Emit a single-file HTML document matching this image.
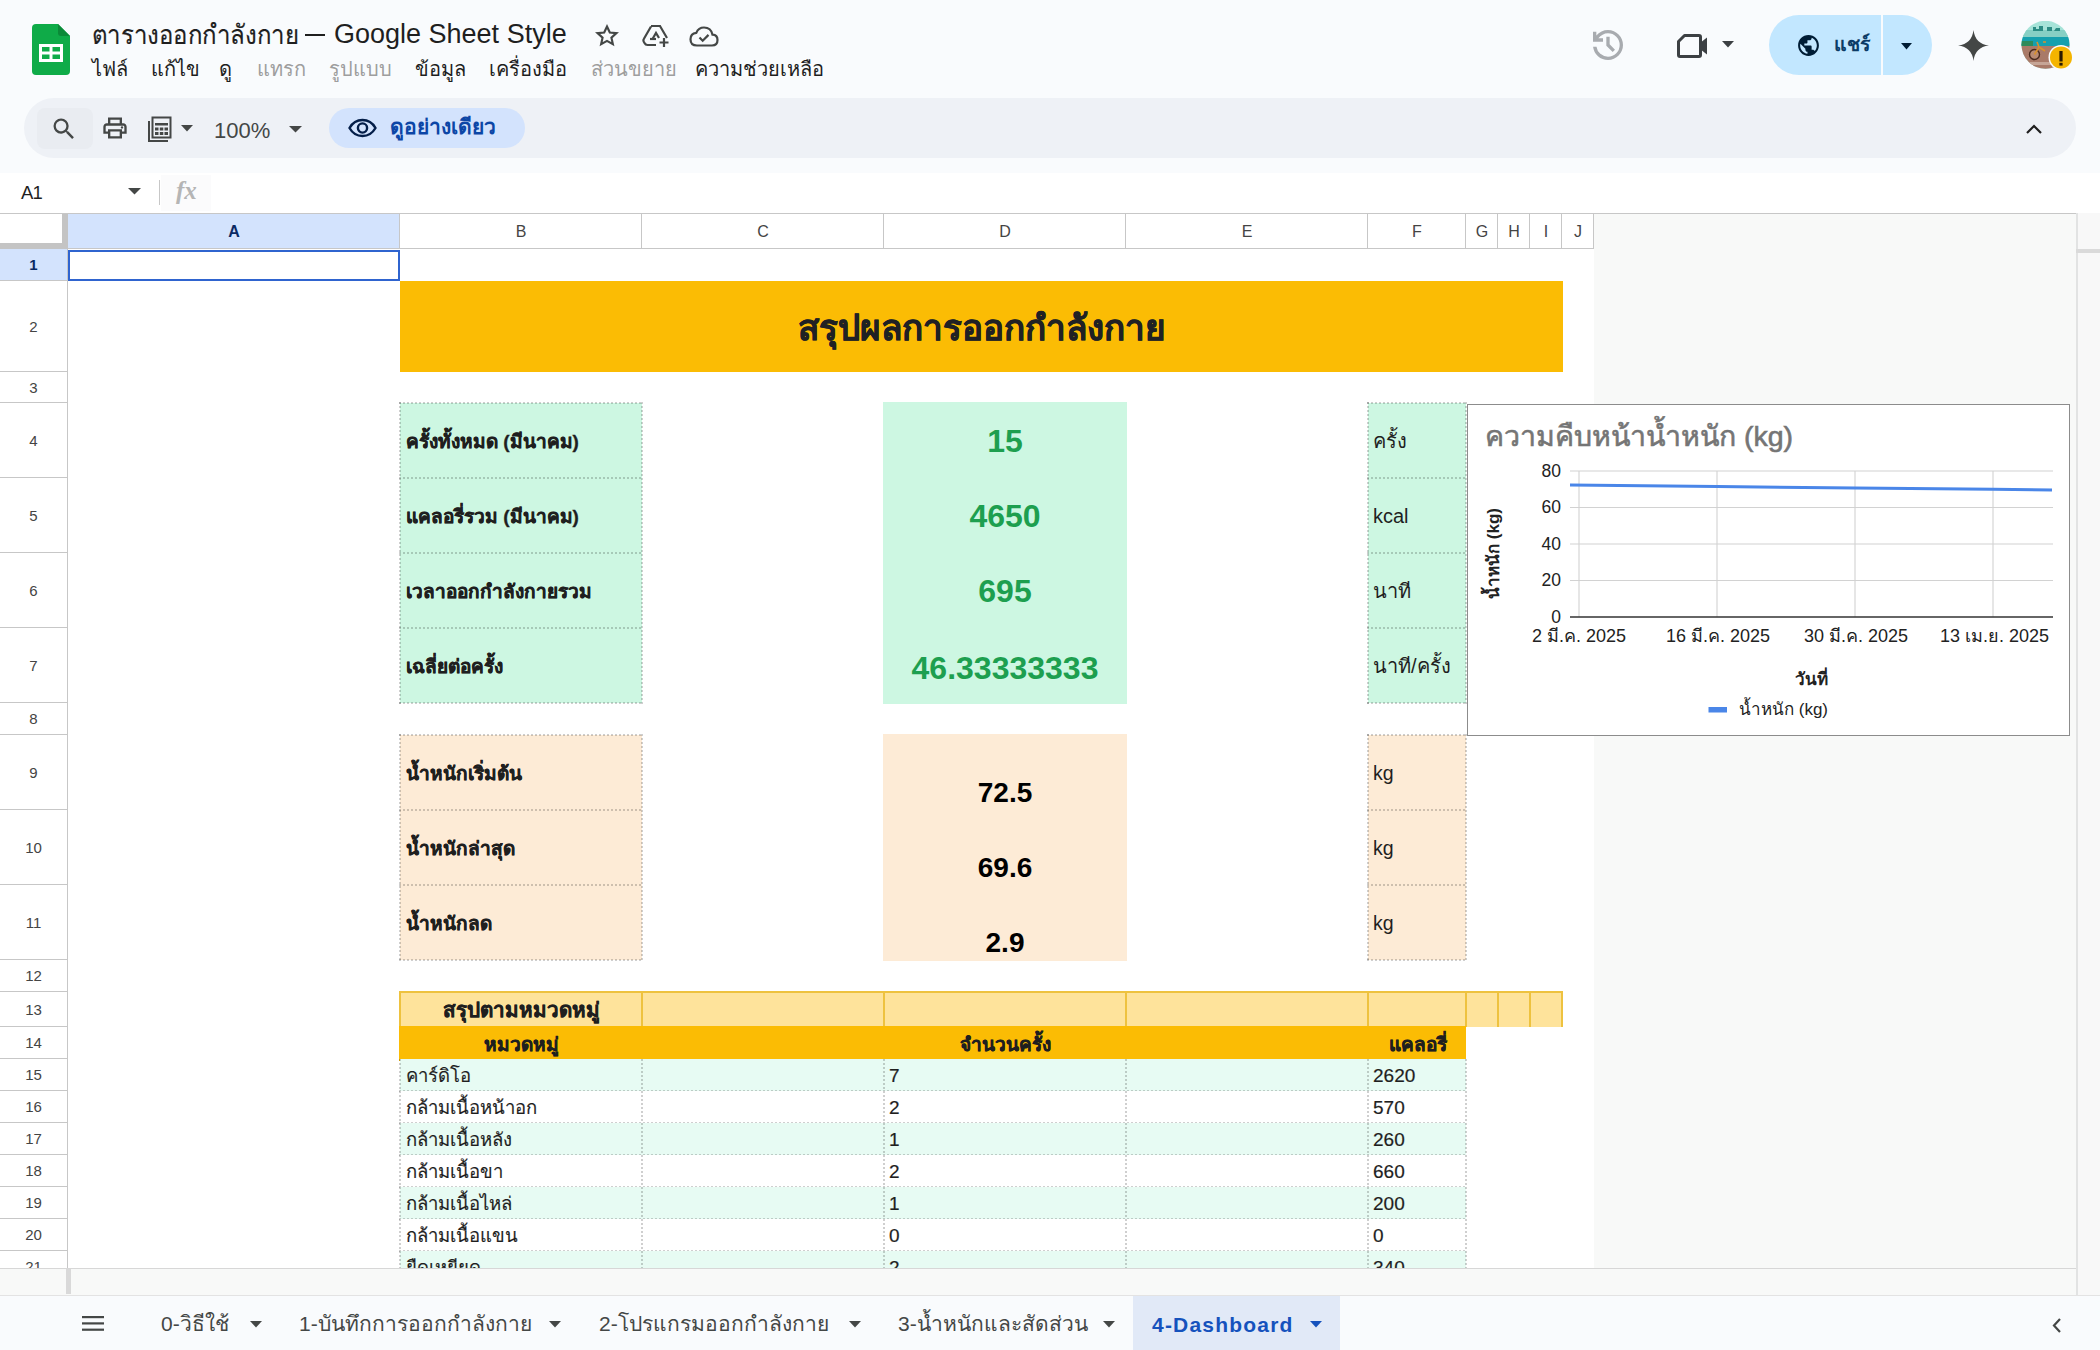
<!DOCTYPE html>
<html><head><meta charset="utf-8">
<style>
*{box-sizing:border-box}
html,body{margin:0;padding:0}
body{width:2100px;height:1350px;overflow:hidden;position:relative;background:#f9fbfd;font-family:"Liberation Sans",sans-serif;color:#1f1f1f}
.a{position:absolute}
.t{position:absolute;white-space:nowrap;line-height:1}
.ch{position:absolute;top:213px;height:36px;border-right:1px solid #c7c7c7;border-bottom:1px solid #c7c7c7;border-top:1px solid #c7c7c7;background:#fff;font-size:16px;color:#444;text-align:center;line-height:35px}
.rh{position:absolute;left:0;width:68px;border-right:1px solid #c7c7c7;border-bottom:1px solid #c7c7c7;background:#fff;font-size:15px;color:#444;text-align:center;display:flex;align-items:center;justify-content:center}
.cell{position:absolute;white-space:nowrap;overflow:hidden}
.dot{border:1px dotted #b5b5b5}
.g{background:#cef7e3}
.o{background:#fdebd6}
</style></head>
<body>
<!-- ===== HEADER ===== -->
<div id="hdr">
  <!-- sheets logo -->
  <svg class="a" style="left:32px;top:24px" width="38" height="51" viewBox="0 0 38 51">
    <path d="M4 0H26L38 12V47Q38 51 34 51H4Q0 51 0 47V4Q0 0 4 0Z" fill="#0f9d58" fill-opacity="1" style="fill:#0fab48"/>
    <path d="M26 0V9Q26 12 29 12H38Z" fill="#0b8a38"/>
    <rect x="7" y="20" width="24" height="18" fill="#fff"/>
    <rect x="10" y="23" width="7.5" height="4.5" fill="#0fab48"/>
    <rect x="20.5" y="23" width="7.5" height="4.5" fill="#0fab48"/>
    <rect x="10" y="30.5" width="7.5" height="4.5" fill="#0fab48"/>
    <rect x="20.5" y="30.5" width="7.5" height="4.5" fill="#0fab48"/>
  </svg>
  <div class="t" style="left:92px;top:21.5px;font-size:26.5px;color:#1f1f1f;transform:scaleX(0.905);transform-origin:0 0;-webkit-text-stroke:0.2px #1f1f1f">ตารางออกกำลังกาย</div>
  <div class="a" style="left:305px;top:34px;width:20px;height:2px;background:#1f1f1f"></div>
  <div class="t" style="left:334px;top:20.5px;font-size:27px;color:#1f1f1f">Google Sheet Style</div>
  <!-- star -->
  <svg class="a" style="left:594px;top:23px" width="26" height="26" viewBox="0 0 24 24"><path d="M12 3.2l2.6 5.6 6.1.6-4.6 4.1 1.3 6L12 16.5l-5.4 3 1.3-6-4.6-4.1 6.1-.6z" fill="none" stroke="#444746" stroke-width="2" stroke-linejoin="miter"/></svg>
  <!-- drive add -->
  <svg class="a" style="left:642px;top:24px" width="28" height="24" viewBox="0 0 28 24"><path d="M9 2h9l7 12M14 21H5.5Q3.5 21 2.5 19L1.8 17.8Q1 16.3 1.8 15L9 2.5" fill="none" stroke="#444746" stroke-width="2.2"/><path d="M10.5 15L14 9l3 5" fill="none" stroke="#444746" stroke-width="2.2"/><path d="M8 15h6" stroke="#444746" stroke-width="2.2"/><path d="M22 14v9M17.5 18.5h9" stroke="#444746" stroke-width="2.2"/></svg>
  <!-- cloud -->
  <svg class="a" style="left:689px;top:26px" width="30" height="21" viewBox="0 0 30 21"><path d="M8 19.5H23Q28.5 19.5 28.5 14Q28.5 9 23.5 8.7Q22 1.5 15 1.5Q9.5 1.5 7.3 6.8Q1.5 7.5 1.5 13.2Q1.5 19.5 8 19.5Z" fill="none" stroke="#444746" stroke-width="2.2"/><path d="M10.5 11.5l3.2 3.2 5.8-5.8" fill="none" stroke="#444746" stroke-width="2.2"/></svg>
  <!-- menu -->
  <div class="t" style="left:92px;top:59px;font-size:20px;color:#1f1f1f">ไฟล์</div>
  <div class="t" style="left:151px;top:59px;font-size:20px;color:#1f1f1f">แก้ไข</div>
  <div class="t" style="left:219px;top:59px;font-size:20px;color:#1f1f1f">ดู</div>
  <div class="t" style="left:257px;top:59px;font-size:20px;color:#9e9e9e">แทรก</div>
  <div class="t" style="left:329px;top:59px;font-size:20px;color:#9e9e9e">รูปแบบ</div>
  <div class="t" style="left:415px;top:59px;font-size:20px;color:#1f1f1f">ข้อมูล</div>
  <div class="t" style="left:489px;top:59px;font-size:20px;color:#1f1f1f">เครื่องมือ</div>
  <div class="t" style="left:591px;top:59px;font-size:20px;color:#9e9e9e">ส่วนขยาย</div>
  <div class="t" style="left:695px;top:59px;font-size:20px;color:#1f1f1f">ความช่วยเหลือ</div>

  <!-- history -->
  <svg class="a" style="left:1588px;top:25px" width="40" height="40" viewBox="0 -960 960 960"><path d="M480-120q-138 0-240.5-91.5T122-440h82q14 104 92.5 172T480-200q117 0 198.5-81.5T760-480q0-117-81.5-198.5T480-760q-69 0-129 32t-101 88h110v80H120v-240h80v94q51-64 124.5-99T480-840q75 0 140.5 28.5t114 77q48.5 48.5 77 114T840-480q0 75-28.5 140.5t-77 114q-48.5 48.5-114 77T480-120Zm112-192L440-464v-216h80v184l128 128-56 56Z" fill="#a8abaf"/></svg>
  <!-- camera -->
  <svg class="a" style="left:1676px;top:33px" width="32" height="26" viewBox="0 0 32 26"><path d="M2.5 8.5L8.5 2.5H23Q24.5 2.5 24.5 4V22Q24.5 23.5 23 23.5H4Q2.5 23.5 2.5 22Z" fill="none" stroke="#3c4043" stroke-width="3" stroke-linejoin="round"/><path d="M24 10L31 4.5V21.5L24 16Z" fill="#3c4043"/></svg>
  <svg class="a" style="left:1722px;top:41px" width="12" height="7" viewBox="0 0 12 7"><path d="M0 0H12L6 6.5Z" fill="#3c4043"/></svg>
  <!-- share -->
  <div class="a" style="left:1769px;top:15px;width:163px;height:60px;border-radius:30px;background:#c2e7ff"></div>
  <div class="a" style="left:1881px;top:15px;width:2px;height:60px;background:#f9fbfd"></div>
  <svg class="a" style="left:1796px;top:33px" width="25" height="25" viewBox="0 0 24 24"><path d="M12 2C6.48 2 2 6.48 2 12s4.48 10 10 10 10-4.48 10-10S17.52 2 12 2zm-1 17.93c-3.95-.49-7-3.85-7-7.93 0-.62.08-1.21.21-1.79L9 15v1c0 1.1.9 2 2 2v1.93zm6.9-2.54c-.26-.81-1-1.39-1.9-1.39h-1v-3c0-.55-.45-1-1-1H8v-2h2c.55 0 1-.45 1-1V7h2c1.1 0 2-.9 2-2v-.41c2.93 1.19 5 4.06 5 7.41 0 2.08-.8 3.97-2.1 5.39z" fill="#001d35"/></svg>
  <div class="t" style="left:1834px;top:35px;font-size:19.5px;font-weight:bold;color:#0b3b66">แชร์</div>
  <svg class="a" style="left:1901px;top:43px" width="11" height="7" viewBox="0 0 11 7"><path d="M0 0H11L5.5 6.5Z" fill="#001d35"/></svg>
  <!-- gemini -->
  <svg class="a" style="left:1958px;top:30px" width="31" height="31" viewBox="0 0 30 30"><path d="M15 0Q16.5 13.5 30 15Q16.5 16.5 15 30Q13.5 16.5 0 15Q13.5 13.5 15 0Z" fill="#444746"/></svg>
  <!-- avatar -->
  <svg class="a" style="left:2021px;top:21px" width="56" height="52" viewBox="0 0 56 52">
    <defs><clipPath id="av"><circle cx="24.5" cy="23.8" r="24"/></clipPath></defs>
    <g clip-path="url(#av)">
      <rect x="0" y="0" width="50" height="50" fill="#a6e3d8"/>
      <rect x="0" y="9" width="50" height="7" fill="#86cfc4"/>
      <path d="M12 10V6h3v2h3V5h4v5zM26 10V6h5v4zM33 10l2-3h4v3z" fill="#2c8c84"/>
      <rect x="0" y="16" width="50" height="9" fill="#16a0ae"/>
      <rect x="0" y="20" width="12" height="5" fill="#2e8a5a"/>
      <rect x="0" y="25" width="50" height="25" fill="#a97a68"/>
      <rect x="0" y="41" width="50" height="3" fill="#c6a596"/>
      <circle cx="13.5" cy="33.5" r="5" fill="#b88a72" stroke="#4a2a1e" stroke-width="1.4"/>
      <path d="M13.5 33.5L18 26L24 30M18 26L16 21M22 21h3" fill="none" stroke="#d9902d" stroke-width="1.6"/>
    </g>
    <circle cx="40" cy="36.4" r="12.5" fill="#f9fbfd"/>
    <circle cx="40" cy="36.4" r="11" fill="#f4b400"/>
    <rect x="38.4" y="30" width="3.2" height="10.5" fill="#2a1a00"/>
    <rect x="38.4" y="41.8" width="3.2" height="2.8" fill="#2a1a00"/>
  </svg>

  <!-- toolbar -->
  <div class="a" style="left:24px;top:98px;width:2052px;height:60px;border-radius:30px;background:#eef1f6"></div>
  <div class="a" style="left:37px;top:108px;width:56px;height:41px;border-radius:8px;background:#e9ecf1"></div>
  <svg class="a" style="left:50px;top:115px" width="28" height="28" viewBox="0 0 24 24"><path d="M15.5 14h-.79l-.28-.27A6.471 6.471 0 0 0 16 9.5 6.5 6.5 0 1 0 9.5 16c1.61 0 3.09-.59 4.23-1.57l.27.28v.79l5 4.99L20.49 19l-4.99-5zm-6 0C7.01 14 5 11.99 5 9.5S7.01 5 9.5 5 14 7.01 14 9.5 11.99 14 9.5 14z" fill="#444746"/></svg>
  <svg class="a" style="left:101px;top:114px" width="28" height="28" viewBox="0 0 24 24"><path d="M19 8h-1V3H6v5H5c-1.66 0-3 1.34-3 3v6h4v4h12v-4h4v-6c0-1.66-1.34-3-3-3zM8 5h8v3H8V5zm8 12v2H8v-4h8v2zm2-2v-2H6v2H4v-4c0-.55.45-1 1-1h14c.55 0 1 .45 1 1v4h-2z" fill="#444746"/><circle cx="18" cy="11.5" r="1" fill="#444746"/></svg>
  <svg class="a" style="left:147px;top:116px" width="26" height="26" viewBox="0 0 26 26"><path d="M2 5V25H21" fill="none" stroke="#444746" stroke-width="2"/><rect x="5.5" y="1.5" width="18" height="20" fill="none" stroke="#444746" stroke-width="2"/><rect x="8" y="7" width="13" height="2.5" fill="#444746"/><rect x="8" y="11.5" width="3.5" height="3" fill="#444746"/><rect x="12.8" y="11.5" width="3.5" height="3" fill="#444746"/><rect x="17.5" y="11.5" width="3.5" height="3" fill="#444746"/><rect x="8" y="16" width="3.5" height="3" fill="#444746"/><rect x="12.8" y="16" width="3.5" height="3" fill="#444746"/><rect x="17.5" y="16" width="3.5" height="3" fill="#444746"/></svg>
  <svg class="a" style="left:181px;top:125px" width="12" height="7" viewBox="0 0 12 7"><path d="M0 0H12L6 6.5Z" fill="#444746"/></svg>
  <div class="t" style="left:214px;top:120px;font-size:22px;color:#444746">100%</div>
  <svg class="a" style="left:289px;top:126px" width="13" height="7" viewBox="0 0 13 7"><path d="M0 0H13L6.5 6.5Z" fill="#444746"/></svg>
  <div class="a" style="left:329px;top:108px;width:196px;height:40px;border-radius:20px;background:#d3e3fd"></div>
  <svg class="a" style="left:348px;top:116px" width="29" height="24" viewBox="0 0 29 24"><path d="M14.5 4C8 4 3.5 8.5 1.5 12C3.5 15.5 8 20 14.5 20S25.5 15.5 27.5 12C25.5 8.5 21 4 14.5 4Z" fill="none" stroke="#041e49" stroke-width="2.4"/><circle cx="14.5" cy="12" r="4.6" fill="none" stroke="#041e49" stroke-width="2.4"/></svg>
  <div class="t" style="left:390px;top:116px;font-size:21px;font-weight:bold;color:#0c46a6">ดูอย่างเดียว</div>
  <svg class="a" style="left:2026px;top:124px" width="16" height="10" viewBox="0 0 16 10"><path d="M1 9L8 2L15 9" fill="none" stroke="#1f1f1f" stroke-width="2.2"/></svg>
</div>

<!-- ===== FORMULA BAR ===== -->
<div class="a" style="left:0;top:173px;width:2100px;height:40px;background:#fff"></div>
<div class="t" style="left:21px;top:184px;font-size:18.5px;color:#1f1f1f;letter-spacing:-0.8px">A1</div>
<svg class="a" style="left:128px;top:188px" width="13" height="7" viewBox="0 0 13 7"><path d="M0 0H13L6.5 6.5Z" fill="#444746"/></svg>
<div class="a" style="left:159px;top:180px;width:1px;height:25px;background:#c7c7c7"></div>
<div class="a" style="left:161px;top:175px;width:50px;height:36px;background:#fbfbfc"></div>
<div class="t" style="left:176px;top:178px;font-size:25px;font-style:italic;font-weight:bold;font-family:'Liberation Serif',serif;color:#b5b5b5">fx</div>

<div class="a" style="left:68px;top:249px;width:1526px;height:1020px;background:#fff"></div>
<div class="a" style="left:1594px;top:213px;width:482px;height:1056px;background:#f8f9f8"></div>
<div class="a" style="left:0;top:249px;width:68px;height:1020px;background:#fff"></div>
<div class="a" style="left:0;top:213px;width:1594px;height:36px;background:#fff"></div>
<div class="a" style="left:0;top:213px;width:2076px;height:1px;background:#c7c7c7"></div>
<div class="a" style="left:62px;top:214px;width:6px;height:35px;background:#c4c4c4"></div>
<div class="a" style="left:0;top:243px;width:68px;height:6px;background:#c4c4c4"></div>
<div class="a" style="left:68px;top:214px;width:332px;height:35px;background:#d3e3fd"></div>
<div class="t" style="left:68px;top:224px;width:332px;text-align:center;font-size:16px;font-weight:bold;color:#0b2a63">A</div>
<div class="a" style="left:399px;top:214px;width:1px;height:35px;background:#c7c7c7"></div>
<div class="t" style="left:400px;top:224px;width:242px;text-align:center;font-size:16px;color:#444">B</div>
<div class="a" style="left:641px;top:214px;width:1px;height:35px;background:#c7c7c7"></div>
<div class="t" style="left:642px;top:224px;width:242px;text-align:center;font-size:16px;color:#444">C</div>
<div class="a" style="left:883px;top:214px;width:1px;height:35px;background:#c7c7c7"></div>
<div class="t" style="left:884px;top:224px;width:242px;text-align:center;font-size:16px;color:#444">D</div>
<div class="a" style="left:1125px;top:214px;width:1px;height:35px;background:#c7c7c7"></div>
<div class="t" style="left:1126px;top:224px;width:242px;text-align:center;font-size:16px;color:#444">E</div>
<div class="a" style="left:1367px;top:214px;width:1px;height:35px;background:#c7c7c7"></div>
<div class="t" style="left:1368px;top:224px;width:98px;text-align:center;font-size:16px;color:#444">F</div>
<div class="a" style="left:1465px;top:214px;width:1px;height:35px;background:#c7c7c7"></div>
<div class="t" style="left:1466px;top:224px;width:32px;text-align:center;font-size:16px;color:#444">G</div>
<div class="a" style="left:1497px;top:214px;width:1px;height:35px;background:#c7c7c7"></div>
<div class="t" style="left:1498px;top:224px;width:32px;text-align:center;font-size:16px;color:#444">H</div>
<div class="a" style="left:1529px;top:214px;width:1px;height:35px;background:#c7c7c7"></div>
<div class="t" style="left:1530px;top:224px;width:32px;text-align:center;font-size:16px;color:#444">I</div>
<div class="a" style="left:1561px;top:214px;width:1px;height:35px;background:#c7c7c7"></div>
<div class="t" style="left:1562px;top:224px;width:32px;text-align:center;font-size:16px;color:#444">J</div>
<div class="a" style="left:1593px;top:214px;width:1px;height:35px;background:#c7c7c7"></div>
<div class="a" style="left:68px;top:248px;width:1526px;height:1px;background:#c7c7c7"></div>
<div class="a" style="left:0;top:249px;width:67px;height:32px;background:#d3e3fd"></div>
<div class="t" style="left:0;top:249px;width:67px;height:32px;line-height:32px;text-align:center;font-size:15px;font-weight:bold;color:#0b2a63">1</div>
<div class="a" style="left:0;top:280px;width:67px;height:1px;background:#c7c7c7"></div>
<div class="t" style="left:0;top:281px;width:67px;height:91px;line-height:91px;text-align:center;font-size:15px;color:#444">2</div>
<div class="a" style="left:0;top:371px;width:67px;height:1px;background:#c7c7c7"></div>
<div class="t" style="left:0;top:372px;width:67px;height:31px;line-height:31px;text-align:center;font-size:15px;color:#444">3</div>
<div class="a" style="left:0;top:402px;width:67px;height:1px;background:#c7c7c7"></div>
<div class="t" style="left:0;top:403px;width:67px;height:75px;line-height:75px;text-align:center;font-size:15px;color:#444">4</div>
<div class="a" style="left:0;top:477px;width:67px;height:1px;background:#c7c7c7"></div>
<div class="t" style="left:0;top:478px;width:67px;height:75px;line-height:75px;text-align:center;font-size:15px;color:#444">5</div>
<div class="a" style="left:0;top:552px;width:67px;height:1px;background:#c7c7c7"></div>
<div class="t" style="left:0;top:553px;width:67px;height:75px;line-height:75px;text-align:center;font-size:15px;color:#444">6</div>
<div class="a" style="left:0;top:627px;width:67px;height:1px;background:#c7c7c7"></div>
<div class="t" style="left:0;top:628px;width:67px;height:75px;line-height:75px;text-align:center;font-size:15px;color:#444">7</div>
<div class="a" style="left:0;top:702px;width:67px;height:1px;background:#c7c7c7"></div>
<div class="t" style="left:0;top:703px;width:67px;height:32px;line-height:32px;text-align:center;font-size:15px;color:#444">8</div>
<div class="a" style="left:0;top:734px;width:67px;height:1px;background:#c7c7c7"></div>
<div class="t" style="left:0;top:735px;width:67px;height:75px;line-height:75px;text-align:center;font-size:15px;color:#444">9</div>
<div class="a" style="left:0;top:809px;width:67px;height:1px;background:#c7c7c7"></div>
<div class="t" style="left:0;top:810px;width:67px;height:75px;line-height:75px;text-align:center;font-size:15px;color:#444">10</div>
<div class="a" style="left:0;top:884px;width:67px;height:1px;background:#c7c7c7"></div>
<div class="t" style="left:0;top:885px;width:67px;height:75px;line-height:75px;text-align:center;font-size:15px;color:#444">11</div>
<div class="a" style="left:0;top:959px;width:67px;height:1px;background:#c7c7c7"></div>
<div class="t" style="left:0;top:960px;width:67px;height:32px;line-height:32px;text-align:center;font-size:15px;color:#444">12</div>
<div class="a" style="left:0;top:991px;width:67px;height:1px;background:#c7c7c7"></div>
<div class="t" style="left:0;top:992px;width:67px;height:35px;line-height:35px;text-align:center;font-size:15px;color:#444">13</div>
<div class="a" style="left:0;top:1026px;width:67px;height:1px;background:#c7c7c7"></div>
<div class="t" style="left:0;top:1027px;width:67px;height:32px;line-height:32px;text-align:center;font-size:15px;color:#444">14</div>
<div class="a" style="left:0;top:1058px;width:67px;height:1px;background:#c7c7c7"></div>
<div class="t" style="left:0;top:1059px;width:67px;height:32px;line-height:32px;text-align:center;font-size:15px;color:#444">15</div>
<div class="a" style="left:0;top:1090px;width:67px;height:1px;background:#c7c7c7"></div>
<div class="t" style="left:0;top:1091px;width:67px;height:32px;line-height:32px;text-align:center;font-size:15px;color:#444">16</div>
<div class="a" style="left:0;top:1122px;width:67px;height:1px;background:#c7c7c7"></div>
<div class="t" style="left:0;top:1123px;width:67px;height:32px;line-height:32px;text-align:center;font-size:15px;color:#444">17</div>
<div class="a" style="left:0;top:1154px;width:67px;height:1px;background:#c7c7c7"></div>
<div class="t" style="left:0;top:1155px;width:67px;height:32px;line-height:32px;text-align:center;font-size:15px;color:#444">18</div>
<div class="a" style="left:0;top:1186px;width:67px;height:1px;background:#c7c7c7"></div>
<div class="t" style="left:0;top:1187px;width:67px;height:32px;line-height:32px;text-align:center;font-size:15px;color:#444">19</div>
<div class="a" style="left:0;top:1218px;width:67px;height:1px;background:#c7c7c7"></div>
<div class="t" style="left:0;top:1219px;width:67px;height:32px;line-height:32px;text-align:center;font-size:15px;color:#444">20</div>
<div class="a" style="left:0;top:1250px;width:67px;height:1px;background:#c7c7c7"></div>
<div class="t" style="left:0;top:1251px;width:67px;height:32px;line-height:32px;text-align:center;font-size:15px;color:#444">21</div>
<div class="a" style="left:67px;top:249px;width:1px;height:1020px;background:#c7c7c7"></div>
<div class="a" style="left:400px;top:281px;width:1163px;height:91px;background:#fbbc04;"></div>
<div class="t" style="left:400px;top:310px;width:1163px;text-align:center;font-size:35px;font-weight:bold;color:#202124;-webkit-text-stroke:0.5px #202124">สรุปผลการออกกำลังกาย</div>
<div class="a" style="left:400px;top:403px;width:242px;height:300px;background:#cdf7e2;"></div>
<div class="a" style="left:883px;top:402px;width:244px;height:302px;background:#cdf7e2;"></div>
<div class="a" style="left:1368px;top:403px;width:98px;height:300px;background:#cdf7e2;"></div>
<div class="a" style="left:399px;top:402px;width:244px;height:2px;background:repeating-linear-gradient(90deg,rgba(0,0,0,.19) 0 2px,transparent 2px 4px)"></div>
<div class="a" style="left:1367px;top:402px;width:100px;height:2px;background:repeating-linear-gradient(90deg,rgba(0,0,0,.19) 0 2px,transparent 2px 4px)"></div>
<div class="a" style="left:399px;top:477px;width:244px;height:2px;background:repeating-linear-gradient(90deg,rgba(0,0,0,.19) 0 2px,transparent 2px 4px)"></div>
<div class="a" style="left:1367px;top:477px;width:100px;height:2px;background:repeating-linear-gradient(90deg,rgba(0,0,0,.19) 0 2px,transparent 2px 4px)"></div>
<div class="a" style="left:399px;top:552px;width:244px;height:2px;background:repeating-linear-gradient(90deg,rgba(0,0,0,.19) 0 2px,transparent 2px 4px)"></div>
<div class="a" style="left:1367px;top:552px;width:100px;height:2px;background:repeating-linear-gradient(90deg,rgba(0,0,0,.19) 0 2px,transparent 2px 4px)"></div>
<div class="a" style="left:399px;top:627px;width:244px;height:2px;background:repeating-linear-gradient(90deg,rgba(0,0,0,.19) 0 2px,transparent 2px 4px)"></div>
<div class="a" style="left:1367px;top:627px;width:100px;height:2px;background:repeating-linear-gradient(90deg,rgba(0,0,0,.19) 0 2px,transparent 2px 4px)"></div>
<div class="a" style="left:399px;top:702px;width:244px;height:2px;background:repeating-linear-gradient(90deg,rgba(0,0,0,.19) 0 2px,transparent 2px 4px)"></div>
<div class="a" style="left:1367px;top:702px;width:100px;height:2px;background:repeating-linear-gradient(90deg,rgba(0,0,0,.19) 0 2px,transparent 2px 4px)"></div>
<div class="a" style="left:399px;top:402px;width:2px;height:302px;background:repeating-linear-gradient(180deg,rgba(0,0,0,.19) 0 2px,transparent 2px 4px)"></div>
<div class="a" style="left:641px;top:402px;width:2px;height:302px;background:repeating-linear-gradient(180deg,rgba(0,0,0,.19) 0 2px,transparent 2px 4px)"></div>
<div class="a" style="left:1367px;top:402px;width:2px;height:302px;background:repeating-linear-gradient(180deg,rgba(0,0,0,.19) 0 2px,transparent 2px 4px)"></div>
<div class="a" style="left:1465px;top:402px;width:2px;height:302px;background:repeating-linear-gradient(180deg,rgba(0,0,0,.19) 0 2px,transparent 2px 4px)"></div>
<div class="t" style="left:406px;top:432px;font-size:19px;font-weight:bold;color:#1f1f1f;-webkit-text-stroke:0.35px #1f1f1f">ครั้งทั้งหมด (มีนาคม)</div>
<div class="t" style="left:884px;top:425px;width:242px;text-align:center;font-size:32px;font-weight:bold;color:#1d9f4f;">15</div>
<div class="t" style="left:1373px;top:431px;font-size:20px;color:#1f1f1f;">ครั้ง</div>
<div class="t" style="left:406px;top:507px;font-size:19px;font-weight:bold;color:#1f1f1f;-webkit-text-stroke:0.35px #1f1f1f">แคลอรี่รวม (มีนาคม)</div>
<div class="t" style="left:884px;top:500px;width:242px;text-align:center;font-size:32px;font-weight:bold;color:#1d9f4f;">4650</div>
<div class="t" style="left:1373px;top:506px;font-size:20px;color:#1f1f1f;">kcal</div>
<div class="t" style="left:406px;top:582px;font-size:19px;font-weight:bold;color:#1f1f1f;-webkit-text-stroke:0.35px #1f1f1f">เวลาออกกำลังกายรวม</div>
<div class="t" style="left:884px;top:575px;width:242px;text-align:center;font-size:32px;font-weight:bold;color:#1d9f4f;">695</div>
<div class="t" style="left:1373px;top:581px;font-size:20px;color:#1f1f1f;">นาที</div>
<div class="t" style="left:406px;top:657px;font-size:19px;font-weight:bold;color:#1f1f1f;-webkit-text-stroke:0.35px #1f1f1f">เฉลี่ยต่อครั้ง</div>
<div class="t" style="left:884px;top:652px;width:242px;text-align:center;font-size:32px;font-weight:bold;color:#1d9f4f;">46.33333333</div>
<div class="t" style="left:1373px;top:656px;font-size:20px;color:#1f1f1f;">นาที/ครั้ง</div>
<div class="a" style="left:400px;top:735px;width:242px;height:225px;background:#fdebd6;"></div>
<div class="a" style="left:883px;top:734px;width:244px;height:227px;background:#fdebd6;"></div>
<div class="a" style="left:1368px;top:735px;width:98px;height:225px;background:#fdebd6;"></div>
<div class="a" style="left:399px;top:734px;width:244px;height:2px;background:repeating-linear-gradient(90deg,rgba(0,0,0,.19) 0 2px,transparent 2px 4px)"></div>
<div class="a" style="left:1367px;top:734px;width:100px;height:2px;background:repeating-linear-gradient(90deg,rgba(0,0,0,.19) 0 2px,transparent 2px 4px)"></div>
<div class="a" style="left:399px;top:809px;width:244px;height:2px;background:repeating-linear-gradient(90deg,rgba(0,0,0,.19) 0 2px,transparent 2px 4px)"></div>
<div class="a" style="left:1367px;top:809px;width:100px;height:2px;background:repeating-linear-gradient(90deg,rgba(0,0,0,.19) 0 2px,transparent 2px 4px)"></div>
<div class="a" style="left:399px;top:884px;width:244px;height:2px;background:repeating-linear-gradient(90deg,rgba(0,0,0,.19) 0 2px,transparent 2px 4px)"></div>
<div class="a" style="left:1367px;top:884px;width:100px;height:2px;background:repeating-linear-gradient(90deg,rgba(0,0,0,.19) 0 2px,transparent 2px 4px)"></div>
<div class="a" style="left:399px;top:959px;width:244px;height:2px;background:repeating-linear-gradient(90deg,rgba(0,0,0,.19) 0 2px,transparent 2px 4px)"></div>
<div class="a" style="left:1367px;top:959px;width:100px;height:2px;background:repeating-linear-gradient(90deg,rgba(0,0,0,.19) 0 2px,transparent 2px 4px)"></div>
<div class="a" style="left:399px;top:734px;width:2px;height:227px;background:repeating-linear-gradient(180deg,rgba(0,0,0,.19) 0 2px,transparent 2px 4px)"></div>
<div class="a" style="left:641px;top:734px;width:2px;height:227px;background:repeating-linear-gradient(180deg,rgba(0,0,0,.19) 0 2px,transparent 2px 4px)"></div>
<div class="a" style="left:1367px;top:734px;width:2px;height:227px;background:repeating-linear-gradient(180deg,rgba(0,0,0,.19) 0 2px,transparent 2px 4px)"></div>
<div class="a" style="left:1465px;top:734px;width:2px;height:227px;background:repeating-linear-gradient(180deg,rgba(0,0,0,.19) 0 2px,transparent 2px 4px)"></div>
<div class="t" style="left:406px;top:764px;font-size:19px;font-weight:bold;color:#1f1f1f;-webkit-text-stroke:0.35px #1f1f1f">น้ำหนักเริ่มต้น</div>
<div class="t" style="left:884px;top:778.5px;width:242px;text-align:center;font-size:28px;font-weight:bold;color:#000;">72.5</div>
<div class="t" style="left:1373px;top:764px;font-size:19.5px;color:#1f1f1f;">kg</div>
<div class="t" style="left:406px;top:839px;font-size:19px;font-weight:bold;color:#1f1f1f;-webkit-text-stroke:0.35px #1f1f1f">น้ำหนักล่าสุด</div>
<div class="t" style="left:884px;top:853.5px;width:242px;text-align:center;font-size:28px;font-weight:bold;color:#000;">69.6</div>
<div class="t" style="left:1373px;top:839px;font-size:19.5px;color:#1f1f1f;">kg</div>
<div class="t" style="left:406px;top:914px;font-size:19px;font-weight:bold;color:#1f1f1f;-webkit-text-stroke:0.35px #1f1f1f">น้ำหนักลด</div>
<div class="t" style="left:884px;top:928.5px;width:242px;text-align:center;font-size:28px;font-weight:bold;color:#000;">2.9</div>
<div class="t" style="left:1373px;top:914px;font-size:19.5px;color:#1f1f1f;">kg</div>
<div class="a" style="left:399px;top:991px;width:1164px;height:36px;background:#fee39b;"></div>
<div class="a" style="left:399px;top:991px;width:1164px;height:36px;border:2px solid #eec23f;border-bottom:none"></div>
<div class="a" style="left:641px;top:991px;width:2px;height:36px;background:#eec23f"></div>
<div class="a" style="left:883px;top:991px;width:2px;height:36px;background:#eec23f"></div>
<div class="a" style="left:1125px;top:991px;width:2px;height:36px;background:#eec23f"></div>
<div class="a" style="left:1367px;top:991px;width:2px;height:36px;background:#eec23f"></div>
<div class="a" style="left:1465px;top:991px;width:2px;height:36px;background:#eec23f"></div>
<div class="a" style="left:1497px;top:991px;width:2px;height:36px;background:#eec23f"></div>
<div class="a" style="left:1529px;top:991px;width:2px;height:36px;background:#eec23f"></div>
<div class="a" style="left:1561px;top:991px;width:2px;height:36px;background:#eec23f"></div>
<div class="t" style="left:400px;top:1000px;width:242px;text-align:center;font-size:20.5px;font-weight:bold;color:#1f1f1f;-webkit-text-stroke:0.35px #1f1f1f">สรุปตามหมวดหมู่</div>
<div class="a" style="left:399px;top:1026px;width:1067px;height:34.5px;background:#fbbc04;"></div>
<div class="t" style="left:400px;top:1034.5px;width:242px;text-align:center;font-size:19px;font-weight:bold;color:#1f1f1f;-webkit-text-stroke:0.35px #1f1f1f">หมวดหมู่</div>
<div class="t" style="left:884px;top:1034.5px;width:242px;text-align:center;font-size:19px;font-weight:bold;color:#1f1f1f;-webkit-text-stroke:0.35px #1f1f1f">จำนวนครั้ง</div>
<div class="t" style="left:1368px;top:1034.5px;width:79px;text-align:right;font-size:19px;font-weight:bold;color:#1f1f1f;-webkit-text-stroke:0.35px #1f1f1f">แคลอรี่</div>
<div class="a" style="left:400px;top:1059px;width:1066px;height:32px;background:#e7fbf3;"></div>
<div class="t" style="left:406px;top:1066.5px;font-size:18.5px;color:#1f1f1f;-webkit-text-stroke:0.15px #1f1f1f">คาร์ดิโอ</div>
<div class="t" style="left:889px;top:1066px;font-size:19px;color:#1f1f1f;-webkit-text-stroke:0.2px #1f1f1f">7</div>
<div class="t" style="left:1373px;top:1066px;font-size:19px;color:#1f1f1f;-webkit-text-stroke:0.2px #1f1f1f">2620</div>
<div class="a" style="left:399px;top:1090px;width:1068px;height:2px;background:repeating-linear-gradient(90deg,rgba(0,0,0,.19) 0 2px,transparent 2px 4px)"></div>
<div class="a" style="left:400px;top:1091px;width:1066px;height:32px;background:#ffffff;"></div>
<div class="t" style="left:406px;top:1098.5px;font-size:18.5px;color:#1f1f1f;-webkit-text-stroke:0.15px #1f1f1f">กล้ามเนื้อหน้าอก</div>
<div class="t" style="left:889px;top:1098px;font-size:19px;color:#1f1f1f;-webkit-text-stroke:0.2px #1f1f1f">2</div>
<div class="t" style="left:1373px;top:1098px;font-size:19px;color:#1f1f1f;-webkit-text-stroke:0.2px #1f1f1f">570</div>
<div class="a" style="left:399px;top:1122px;width:1068px;height:2px;background:repeating-linear-gradient(90deg,rgba(0,0,0,.19) 0 2px,transparent 2px 4px)"></div>
<div class="a" style="left:400px;top:1123px;width:1066px;height:32px;background:#e7fbf3;"></div>
<div class="t" style="left:406px;top:1130.5px;font-size:18.5px;color:#1f1f1f;-webkit-text-stroke:0.15px #1f1f1f">กล้ามเนื้อหลัง</div>
<div class="t" style="left:889px;top:1130px;font-size:19px;color:#1f1f1f;-webkit-text-stroke:0.2px #1f1f1f">1</div>
<div class="t" style="left:1373px;top:1130px;font-size:19px;color:#1f1f1f;-webkit-text-stroke:0.2px #1f1f1f">260</div>
<div class="a" style="left:399px;top:1154px;width:1068px;height:2px;background:repeating-linear-gradient(90deg,rgba(0,0,0,.19) 0 2px,transparent 2px 4px)"></div>
<div class="a" style="left:400px;top:1155px;width:1066px;height:32px;background:#ffffff;"></div>
<div class="t" style="left:406px;top:1162.5px;font-size:18.5px;color:#1f1f1f;-webkit-text-stroke:0.15px #1f1f1f">กล้ามเนื้อขา</div>
<div class="t" style="left:889px;top:1162px;font-size:19px;color:#1f1f1f;-webkit-text-stroke:0.2px #1f1f1f">2</div>
<div class="t" style="left:1373px;top:1162px;font-size:19px;color:#1f1f1f;-webkit-text-stroke:0.2px #1f1f1f">660</div>
<div class="a" style="left:399px;top:1186px;width:1068px;height:2px;background:repeating-linear-gradient(90deg,rgba(0,0,0,.19) 0 2px,transparent 2px 4px)"></div>
<div class="a" style="left:400px;top:1187px;width:1066px;height:32px;background:#e7fbf3;"></div>
<div class="t" style="left:406px;top:1194.5px;font-size:18.5px;color:#1f1f1f;-webkit-text-stroke:0.15px #1f1f1f">กล้ามเนื้อไหล่</div>
<div class="t" style="left:889px;top:1194px;font-size:19px;color:#1f1f1f;-webkit-text-stroke:0.2px #1f1f1f">1</div>
<div class="t" style="left:1373px;top:1194px;font-size:19px;color:#1f1f1f;-webkit-text-stroke:0.2px #1f1f1f">200</div>
<div class="a" style="left:399px;top:1218px;width:1068px;height:2px;background:repeating-linear-gradient(90deg,rgba(0,0,0,.19) 0 2px,transparent 2px 4px)"></div>
<div class="a" style="left:400px;top:1219px;width:1066px;height:32px;background:#ffffff;"></div>
<div class="t" style="left:406px;top:1226.5px;font-size:18.5px;color:#1f1f1f;-webkit-text-stroke:0.15px #1f1f1f">กล้ามเนื้อแขน</div>
<div class="t" style="left:889px;top:1226px;font-size:19px;color:#1f1f1f;-webkit-text-stroke:0.2px #1f1f1f">0</div>
<div class="t" style="left:1373px;top:1226px;font-size:19px;color:#1f1f1f;-webkit-text-stroke:0.2px #1f1f1f">0</div>
<div class="a" style="left:399px;top:1250px;width:1068px;height:2px;background:repeating-linear-gradient(90deg,rgba(0,0,0,.19) 0 2px,transparent 2px 4px)"></div>
<div class="a" style="left:400px;top:1251px;width:1066px;height:18px;background:#e7fbf3;"></div>
<div class="t" style="left:406px;top:1258.5px;font-size:18.5px;color:#1f1f1f;-webkit-text-stroke:0.15px #1f1f1f">ยืดเหยียด</div>
<div class="t" style="left:889px;top:1258px;font-size:19px;color:#1f1f1f;-webkit-text-stroke:0.2px #1f1f1f">2</div>
<div class="t" style="left:1373px;top:1258px;font-size:19px;color:#1f1f1f;-webkit-text-stroke:0.2px #1f1f1f">340</div>
<div class="a" style="left:399px;top:1282px;width:1068px;height:2px;background:repeating-linear-gradient(90deg,rgba(0,0,0,.19) 0 2px,transparent 2px 4px)"></div>
<div class="a" style="left:399px;top:1059px;width:2px;height:211px;background:repeating-linear-gradient(180deg,rgba(0,0,0,.19) 0 2px,transparent 2px 4px)"></div>
<div class="a" style="left:641px;top:1059px;width:2px;height:211px;background:repeating-linear-gradient(180deg,rgba(0,0,0,.19) 0 2px,transparent 2px 4px)"></div>
<div class="a" style="left:883px;top:1059px;width:2px;height:211px;background:repeating-linear-gradient(180deg,rgba(0,0,0,.19) 0 2px,transparent 2px 4px)"></div>
<div class="a" style="left:1125px;top:1059px;width:2px;height:211px;background:repeating-linear-gradient(180deg,rgba(0,0,0,.19) 0 2px,transparent 2px 4px)"></div>
<div class="a" style="left:1367px;top:1059px;width:2px;height:211px;background:repeating-linear-gradient(180deg,rgba(0,0,0,.19) 0 2px,transparent 2px 4px)"></div>
<div class="a" style="left:1465px;top:1059px;width:2px;height:211px;background:repeating-linear-gradient(180deg,rgba(0,0,0,.19) 0 2px,transparent 2px 4px)"></div>
<div class="a" style="left:68px;top:250px;width:332px;height:31px;border:2px solid #2f64cf"></div>
<div class="a" style="left:0;top:1269px;width:2076px;height:26px;background:#f8f9f8"></div>
<div class="a" style="left:0;top:1268px;width:2076px;height:1px;background:#d7d7d7"></div>
<div class="a" style="left:66px;top:1269px;width:5px;height:25px;background:#d9d9d9"></div>
<div class="a" style="left:2076px;top:213px;width:24px;height:1082px;background:#f8f8f8"></div>
<div class="a" style="left:2076px;top:213px;width:2px;height:1082px;background:#e2e3e3"></div>
<div class="a" style="left:2076px;top:249px;width:24px;height:4px;background:#dadada"></div>
<div class="a" style="left:0;top:1295px;width:2100px;height:55px;background:#f9fbfd;border-top:1px solid #e3e3e3"></div>
<svg class="a" style="left:82px;top:1316px" width="22" height="15" viewBox="0 0 22 15"><rect y="0" width="22" height="2.2" fill="#444746"/><rect y="6.3" width="22" height="2.2" fill="#444746"/><rect y="12.6" width="22" height="2.2" fill="#444746"/></svg>
<div class="t" style="left:161px;top:1313px;font-size:21px;color:#444746;">0-วิธีใช้</div>
<svg class="a" style="left:250px;top:1321px" width="12" height="7" viewBox="0 0 12 7"><path d="M0 0H12L6 6.5Z" fill="#444746"/></svg>
<div class="t" style="left:299px;top:1313px;font-size:21px;color:#444746;">1-บันทึกการออกกำลังกาย</div>
<svg class="a" style="left:549px;top:1321px" width="12" height="7" viewBox="0 0 12 7"><path d="M0 0H12L6 6.5Z" fill="#444746"/></svg>
<div class="t" style="left:599px;top:1313px;font-size:21px;color:#444746;">2-โปรแกรมออกกำลังกาย</div>
<svg class="a" style="left:849px;top:1321px" width="12" height="7" viewBox="0 0 12 7"><path d="M0 0H12L6 6.5Z" fill="#444746"/></svg>
<div class="t" style="left:898px;top:1313px;font-size:21px;color:#444746;">3-น้ำหนักและสัดส่วน</div>
<svg class="a" style="left:1103px;top:1321px" width="12" height="7" viewBox="0 0 12 7"><path d="M0 0H12L6 6.5Z" fill="#444746"/></svg>
<div class="a" style="left:1133px;top:1296px;width:207px;height:54px;background:#e1e9f7;"></div>
<div class="t" style="left:1152px;top:1314px;font-size:21px;font-weight:bold;color:#1552bd;letter-spacing:1.2px">4-Dashboard</div>
<svg class="a" style="left:1310px;top:1321px" width="12" height="7" viewBox="0 0 12 7"><path d="M0 0H12L6 6.5Z" fill="#1552bd"/></svg>
<svg class="a" style="left:2051px;top:1317px" width="11" height="17" viewBox="0 0 11 17"><path d="M9 2L3 8.5L9 15" fill="none" stroke="#444746" stroke-width="2.2"/></svg>
<div class="a" style="left:1467px;top:404px;width:603px;height:332px;background:#fff;border:1px solid #8c8c8c">
<div class="t" style="left:17px;top:16.5px;font-size:28.5px;color:#757575;-webkit-text-stroke:0.6px #757575">ความคืบหน้าน้ำหนัก (kg)</div>
<svg class="a" style="left:-1px;top:-1px" width="603" height="332" viewBox="0 0 603 332"><line x1="103" x2="586" y1="67" y2="67" stroke="#d2d2d2" stroke-width="1.1"/><line x1="103" x2="586" y1="103.5" y2="103.5" stroke="#d2d2d2" stroke-width="1.1"/><line x1="103" x2="586" y1="140" y2="140" stroke="#d2d2d2" stroke-width="1.1"/><line x1="103" x2="586" y1="176.5" y2="176.5" stroke="#d2d2d2" stroke-width="1.1"/><line x1="112" x2="112" y1="67" y2="213" stroke="#d2d2d2" stroke-width="1.1"/><line x1="250" x2="250" y1="67" y2="213" stroke="#d2d2d2" stroke-width="1.1"/><line x1="388" x2="388" y1="67" y2="213" stroke="#d2d2d2" stroke-width="1.1"/><line x1="526" x2="526" y1="67" y2="213" stroke="#d2d2d2" stroke-width="1.1"/><line x1="103" x2="586" y1="213" y2="213" stroke="#333" stroke-width="1.6"/><polyline points="103,81 250,82.5 388,84 526,85.3 585,86" fill="none" stroke="#4a86e8" stroke-width="3"/><rect x="241.5" y="303" width="18.5" height="5.5" fill="#4a86e8"/></svg>
<div class="t" style="left:40px;top:57.5px;width:53px;text-align:right;font-size:17.5px;color:#222">80</div>
<div class="t" style="left:40px;top:94.0px;width:53px;text-align:right;font-size:17.5px;color:#222">60</div>
<div class="t" style="left:40px;top:130.5px;width:53px;text-align:right;font-size:17.5px;color:#222">40</div>
<div class="t" style="left:40px;top:167.0px;width:53px;text-align:right;font-size:17.5px;color:#222">20</div>
<div class="t" style="left:40px;top:203.5px;width:53px;text-align:right;font-size:17.5px;color:#222">0</div>
<div class="t" style="left:41px;top:221.9px;width:140px;text-align:center;font-size:18px;color:#222">2 มี.ค. 2025</div>
<div class="t" style="left:180px;top:221.9px;width:140px;text-align:center;font-size:18px;color:#222">16 มี.ค. 2025</div>
<div class="t" style="left:318px;top:221.9px;width:140px;text-align:center;font-size:18px;color:#222">30 มี.ค. 2025</div>
<div class="t" style="left:456.5px;top:221.9px;width:140px;text-align:center;font-size:18px;color:#222">13 เม.ย. 2025</div>
<div class="t" style="left:293px;top:266px;width:100px;text-align:center;font-size:17px;font-weight:bold;color:#222">วันที่</div>
<div class="t" style="left:271px;top:296px;font-size:17px;color:#222">น้ำหนัก (kg)</div>
<div class="t" style="left:-25px;top:140px;width:100px;text-align:center;font-size:17px;font-weight:bold;color:#222;transform:rotate(-90deg)">น้ำหนัก (kg)</div>
</div></body></html>
